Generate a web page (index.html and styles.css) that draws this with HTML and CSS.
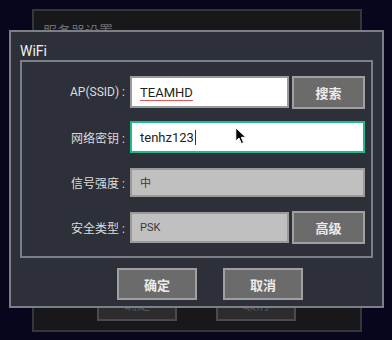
FILE: index.html
```html
<!doctype html>
<html lang="zh-CN">
<head>
  <meta charset="utf-8">
  <title>WiFi</title>
  <link rel="stylesheet" href="styles.css">
</head>
<body>
<div class="screen">

  <!-- dialog underneath -->
  <div class="dialog back">
    <div class="back-title">服务器设置</div>
    <div class="back-actions">
      <span class="back-btn">确定</span>
      <span class="back-btn">取消</span>
    </div>
  </div>

  <!-- wifi dialog -->
  <div class="dialog front">
    <div class="title">WiFi</div>
    <div class="panel">
      <div class="row">
        <label class="label">AP(SSID) :</label>
        <div class="field plain"><span class="typo">TEAMHD</span></div>
        <button class="btn">搜索</button>
      </div>
      <div class="row">
        <label class="label">网络密钥 :</label>
        <div class="field plain focus">tenhz123<i class="caret"></i></div>
      </div>
      <div class="row">
        <label class="label">信号强度 :</label>
        <div class="field readonly wide">中</div>
      </div>
      <div class="row">
        <label class="label">安全类型 :</label>
        <div class="field readonly">PSK</div>
        <button class="btn">高级</button>
      </div>
    </div>
    <div class="actions">
      <button class="btn action">确定</button>
      <button class="btn action">取消</button>
    </div>
  </div>

  <svg class="pointer" width="12" height="18" viewBox="0 0 12 18">
    <path d="M0.8 0.8 L0.8 14 L4 11 L6.4 16.6 L8.6 15.6 L6.3 10.3 L10.8 10.3 Z" fill="#000" stroke="#fff" stroke-width="1"/>
  </svg>
</div>
</body>
</html>
```

FILE: styles.css
```css
html, body {
  margin: 0;
  padding: 0;
}
body {
  background: #08061c;
  font-family: Roboto, "Noto Sans CJK SC", sans-serif;
}
.screen {
  position: relative;
  width: 392px;
  height: 340px;
  overflow: hidden;
}
.dialog {
  position: absolute;
  box-sizing: border-box;
}

/* the settings dialog behind */
.back {
  left: 32px;
  top: 9px;
  width: 330px;
  height: 323px;
  background: #18181b;
  border: 2px solid #35363a;
  display: flex;
  flex-direction: column;
  justify-content: space-between;
}
.back-title {
  color: #6c6c70;
  font-size: 14px;
  line-height: 16px;
  padding: 12px 0 0 9px;
}
.back-actions {
  display: flex;
  gap: 39px;
  padding: 0 0 9px 63px;
}
.back-btn {
  box-sizing: border-box;
  width: 80px;
  height: 32px;
  background: #2c2c2e;
  border: 2px solid #4a4a4d;
  color: #58585a;
  font-size: 13px;
  text-align: center;
  line-height: 28px;
}

/* wifi dialog */
.front {
  left: 9px;
  top: 30px;
  width: 375px;
  height: 278px;
  background: #2d3039;
  border: 2px solid #7b7f88;
  padding: 0 9px;
}
.title {
  color: #f2f2f2;
  font-size: 14px;
  line-height: 16px;
  padding-top: 11px;
  margin-bottom: 1px;
}
.panel {
  box-sizing: border-box;
  height: 198px;
  border: 2px solid #7b7f88;
  padding: 14px 6px 0 0;
  display: flex;
  flex-direction: column;
  gap: 13px;
}
.row {
  display: flex;
  align-items: center;
  height: 32px;
}
.label {
  width: 108px;
  padding-right: 5px;
  box-sizing: border-box;
  text-align: right;
  color: #dcdcdc;
  font-size: 12px;
}
.field {
  box-sizing: border-box;
  width: 159px;
  height: 32px;
  padding-left: 8px;
  display: flex;
  align-items: center;
  border: 2px solid #9a9a9a;
}
.plain {
  background: #fff;
  color: #1e1e1e;
  font-size: 13px;
}
.focus {
  width: 235px;
  border-color: #1dbb8c;
}
.readonly {
  background: #c0c0c0;
  color: #3a3a3a;
  font-size: 11px;
  height: 31px;
}
.wide {
  width: 235px;
  height: 29px;
}
.typo {
  display: inline-block;
  line-height: 14px;
  border-bottom: 1px solid #e25858;
  margin-top: 2px;
}
.caret {
  display: inline-block;
  width: 1px;
  height: 15px;
  background: #333;
  margin-left: 1px;
}
.btn {
  box-sizing: border-box;
  width: 73px;
  height: 33px;
  margin-left: 3px;
  background: #6b6b6b;
  border: 2px solid #a0a0a0;
  color: #ececec;
  font-family: Roboto, "Noto Sans CJK SC", sans-serif;
  font-size: 13px;
  font-weight: bold;
  padding: 0;
}
.actions {
  display: flex;
  gap: 26px;
  padding: 10px 0 0 97px;
}
.action {
  width: 80px;
  height: 32px;
  margin: 0;
}
.pointer {
  position: absolute;
  left: 235px;
  top: 127px;
}
```
